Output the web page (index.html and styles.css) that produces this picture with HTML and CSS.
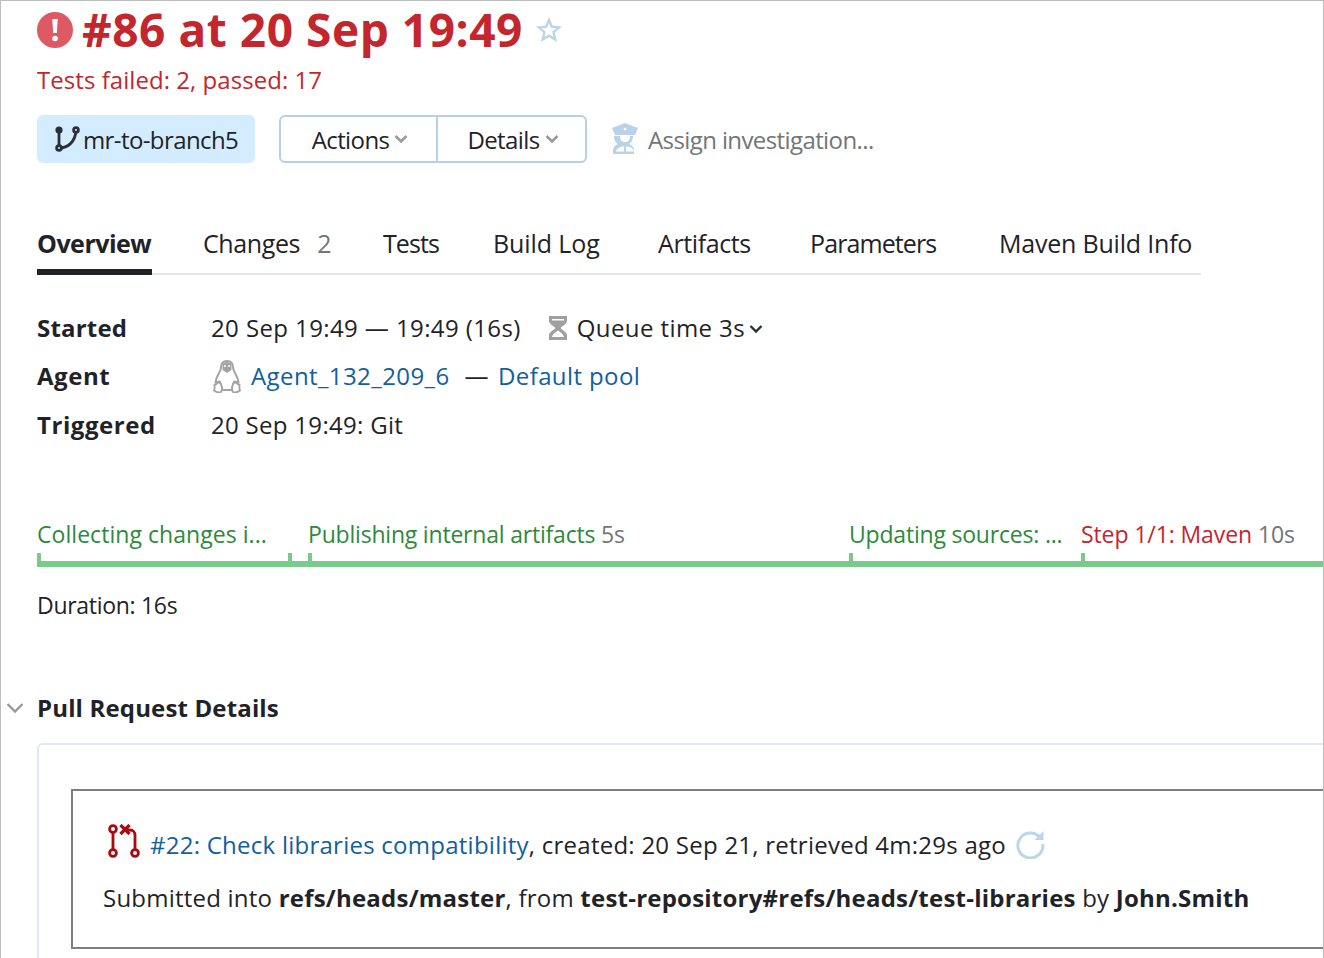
FILE: index.html
```html
<!DOCTYPE html>
<html lang="en">
<head>
  <meta charset="UTF-8">
  <title>#86 at 20 Sep 19:49</title>
  <link rel="stylesheet" href="styles.css">
</head>
<body>
  <div class="page">
    <div class="title-row">
      <svg class="icon-error" viewBox="0 0 36 36" width="36" height="36"><circle cx="18" cy="18" r="18" fill="#dd5a64"/><path d="M15.200 7h5.600l-1 14h-3.600z" fill="#fff"/><circle cx="18" cy="26.500" r="2.800" fill="#fff"/></svg>
      <h1>#86 at 20 Sep 19:49</h1>
      <svg class="icon-star" viewBox="0 0 26 26" width="26" height="26"><path d="M13 3l2.900 6.800 7.300.6-5.600 4.800 1.700 7.200-6.300-3.800-6.300 3.800 1.700-7.200-5.600-4.800 7.300-.6z" fill="none" stroke="#bcd5ea" stroke-width="2.400"/></svg>
    </div>
    <div class="status-text">Tests failed: 2, passed: 17</div>
    <div class="action-row">
      <div class="branch">
        <svg viewBox="0 0 26 28" width="26" height="28"><g fill="none" stroke="#2b3038" stroke-width="2.800"><path d="M5 5v18M5 23c9 0 16-6 17-17"/><circle cx="22" cy="5" r="2.400" fill="#d4ecff"/><circle cx="5" cy="23" r="2.400" fill="#d4ecff"/></g><circle cx="5" cy="5" r="3.600" fill="#2b3038"/></svg>
        <span>mr-to-branch5</span>
      </div>
      <div class="btn-group">
        <div class="btn btn-actions">Actions<svg class="caret" viewBox="0 0 14 10" width="14" height="10"><path d="M1.500 2l5.500 5.500L12.500 2" fill="none" stroke="#9a9a9a" stroke-width="2.600"/></svg></div>
        <div class="btn btn-details">Details<svg class="caret" viewBox="0 0 14 10" width="14" height="10"><path d="M1.500 2l5.500 5.500L12.500 2" fill="none" stroke="#9a9a9a" stroke-width="2.600"/></svg></div>
      </div>
      <div class="assign">
        <svg viewBox="0 0 28 32" width="28" height="32"><path d="M14 0l13 5-3 7H4L1 5z" fill="#b9d2e8"/><circle cx="14" cy="6" r="1.300" fill="#fff"/><path d="M6 13h3c0 4 2 6 5 6s5-2 5-6h3c0 4-1.500 6.500-4 8 3 1 4.500 3 5 6v4H2v-4c.5-3 2-5 5-6-2.500-1.500-4-4-4-8z" fill="#b9d2e8"/><path d="M5 28.500c1-3.500 4-5 8-5v5zM15 23.500c4 0 7 1.500 8 5h-8z" fill="#fff"/></svg>
        <span>Assign investigation...</span>
      </div>
    </div>

    <div class="tabs">
      <div class="tab tab-active">Overview</div>
      <div class="tab tab-changes">Changes <span class="count">2</span></div>
      <div class="tab tab-tests">Tests</div>
      <div class="tab tab-log">Build Log</div>
      <div class="tab tab-artifacts">Artifacts</div>
      <div class="tab tab-params">Parameters</div>
      <div class="tab tab-maven">Maven Build Info</div>
    </div>

    <div class="info">
      <div class="info-label">Started</div>
      <div class="info-value">
        <span>20 Sep 19:49 — 19:49 (16s)</span>
        <svg class="icon-glass" viewBox="0 0 20 26" width="20" height="26"><path d="M1 1h18v5c0 3-5 5-6.500 7 1.500 2 6.500 4 6.500 7v5H1v-5c0-3 5-5 6.500-7C6 11 1 9 1 6z" fill="#a0a0a0"/><path d="M4 4h12v1.600H4zM10 15.500c-2 1.500-5.500 3.500-6 6.500h12c-.5-3-4-5-6-6.500z" fill="#fff"/></svg>
        <span>Queue time 3s</span>
        <svg class="caret-dark" viewBox="0 0 14 10" width="14" height="10"><path d="M1.500 2l5.500 5.500L12.500 2" fill="none" stroke="#2b3038" stroke-width="2.400"/></svg>
      </div>
      <div class="info-label info-label-wide">Agent</div>
      <div class="info-value">
        <svg class="icon-linux" viewBox="0 0 28 33" width="28" height="33"><path d="M14 1c-4 0-6 2.500-6 6.500 0 4.500-5 8-5.500 15l4-1c1 .5 2 5 2.500 8.500h10c.5-3.500 1.500-8 2.500-8.500l4 1c-.5-7-5.500-10.500-5.500-15C20 3.500 18 1 14 1z" fill="#fff" stroke="#a3a3a3" stroke-width="2"/><path d="M9.500 5c0-2 2-3 4.500-3s4.500 1 4.500 3v5l-4.500 3-4.500-3z" fill="#a3a3a3"/><path d="M11 6h2M15 6h2" stroke="#fff" stroke-width="1.600"/><path d="M8 32c-2 1-5 0-7-1.500 1-2 .5-3.500.5-5.500 2 0 3-3 5-2.500 2 1.500 3.500 6.500 1.500 9.500zM20 32c2 1 5 0 7-1.500-1-2-.5-3.500-.5-5.500-2 0-3-3-5-2.500-2 1.500-3.500 6.500-1.500 9.500z" fill="#fff" stroke="#a3a3a3" stroke-width="1.800"/></svg>
        <a href="#">Agent_132_209_6</a>
        <span class="dash">—</span>
        <a href="#">Default pool</a>
      </div>
      <div class="info-label info-label-wide">Triggered</div>
      <div class="info-value"><span class="trigger">20 Sep 19:49: Git</span></div>
    </div>

    <div class="timeline">
      <div class="seg seg-collect"><span class="seg-label ok">Collecting changes i...</span><i></i></div>
      <div class="seg seg-small"><i></i></div>
      <div class="seg seg-publish"><span class="seg-label ok">Publishing internal artifacts <b>5s</b></span><i></i></div>
      <div class="seg seg-update"><span class="seg-label ok">Updating sources: ...</span><i></i></div>
      <div class="seg seg-step"><span class="seg-label bad">Step 1/1: Maven <b>10s</b></span><i></i></div>
    </div>
    <div class="duration">Duration: 16s</div>

    <div class="section-head">
      <svg viewBox="0 0 18 12" width="18" height="12"><path d="M1.500 2l7.500 7.500L16.500 2" fill="none" stroke="#9a9a9a" stroke-width="2.400"/></svg>
      <h2>Pull Request Details</h2>
    </div>
    <div class="pr-card">
      <div class="pr-box">
        <div class="pr-line">
          <svg class="icon-pr" viewBox="0 0 34 40" width="34" height="40"><g fill="none" stroke="#a80c12" stroke-width="2.800"><circle cx="6" cy="5" r="3.400"/><circle cx="6" cy="29" r="3.400"/><circle cx="28" cy="29" r="3.400"/><path d="M6 8.500v17M28 25.500V11c0-3-2-5-5-5h-3"/><path d="M13.500 1l9 9M22.500 1l-9 9" stroke-width="3.200"/></g></svg>
          <a href="#">#22: Check libraries compatibility</a><span>, created: 20 Sep 21, retrieved 4m:29s ago</span>
          <svg class="icon-refresh" viewBox="0 0 30 30" width="30" height="30"><path d="M25 8.500A12.500 12.500 0 1 0 27.800 15" fill="none" stroke="#bcd5ea" stroke-width="3"/><path d="M28.500 2V11H19.500z" fill="#bcd5ea"/></svg>
        </div>
        <div class="pr-submit">Submitted into <b>refs/heads/master</b>, from <b>test-repository#refs/heads/test-libraries</b> by <b>John.Smith</b></div>
      </div>
    </div>
  </div>
</body>
</html>
```

FILE: styles.css
```css
html, body { margin: 0; height: 100%; background: #fff; }
body { font-family: "Open Sans", "Noto Sans", sans-serif; color: #1f2328; overflow: hidden; }
a { color: #11609f; text-decoration: none; }

.page { height: 958px; box-sizing: border-box; border: solid #bdbdbd; border-width: 1px 1px 0 1px; padding-left: 36px; overflow: hidden; }

.title-row { display: flex; align-items: center; height: 58px; }
.title-row h1 { font-size: 46px; line-height: 50px; margin: 0 0 2px 9px; color: #c4262e; font-weight: 700; letter-spacing: 0.55px; white-space: nowrap; }
.icon-star { margin: 0 0 0 13px; }
.status-text { font-size: 24px; line-height: 32px; margin-top: 5px; color: #c4262e; letter-spacing: 0.05px; }

.action-row { display: flex; align-items: center; margin-top: 19px; height: 48px; font-size: 24px; letter-spacing: -0.6px; }
.branch { display: flex; align-items: center; height: 48px; width: 218px; box-sizing: border-box; padding-left: 17px; background: #d4ecff; border-radius: 6px; }
.branch span { margin-left: 3px; }
.btn-group { display: flex; margin-left: 24px; height: 48px; box-sizing: border-box; border: 2px solid #b6d0e6; border-radius: 6px; }
.btn { display: flex; align-items: center; justify-content: center; gap: 5px; box-sizing: border-box; padding-left: 3px; }
.btn-actions { width: 157px; border-right: 2px solid #b6d0e6; }
.btn-details { width: 147px; }
.assign { display: flex; align-items: center; margin-left: 24px; color: #737577; }
.assign span { margin-left: 9px; }

.tabs { display: flex; width: 1164px; margin-top: 50px; height: 62px; box-sizing: border-box; border-bottom: 2px solid #e4e6e8; font-size: 25px; letter-spacing: -0.4px; }
.tab { line-height: 60px; white-space: nowrap; }
.tab-active { width: 115px; height: 62px; box-sizing: border-box; margin-right: 51px; font-weight: 700; border-bottom: 6px solid #1f2328; letter-spacing: -0.5px; }
.tab-changes { width: 180px; }
.tab-tests { width: 110px; letter-spacing: -0.9px; }
.tab-log { width: 165px; letter-spacing: -0.1px; }
.tab-artifacts { width: 152px; letter-spacing: -0.4px; }
.tab-params { width: 189px; letter-spacing: -0.9px; }
.tab-maven { letter-spacing: -0.2px; }
.count { color: #737577; margin-left: 11px; }

.info { display: grid; grid-template-columns: 174px 1fr; grid-template-rows: 49px 48px 50px; margin-top: 28px; font-size: 24px; line-height: 34px; letter-spacing: 0.4px; }
.info-label { display: flex; align-items: center; font-weight: 700; letter-spacing: 0.2px; }
.info-label-wide { letter-spacing: 0.55px; }
.info-value { display: flex; align-items: center; white-space: nowrap; }
.icon-glass { margin-left: 27px; margin-right: 9px; }
.caret-dark { margin-left: 4px; margin-top: 3px; }
.icon-linux { margin-left: 2px; margin-right: 10px; }
.dash { margin: 0 9px 0 15px; }
.trigger { letter-spacing: 0.3px; }

.timeline { display: flex; margin-top: 67px; height: 50px; font-size: 23px; letter-spacing: -0.2px; }
.seg { position: relative; box-sizing: border-box; height: 50px; border-bottom: 6px solid #79cb8a; white-space: nowrap; }
.seg i { position: absolute; left: 0; bottom: 0; width: 4px; height: 8px; background: #79cb8a; }
.seg-collect { width: 251px; letter-spacing: 0.05px; }
.seg-small { width: 20px; }
.seg-publish { width: 541px; }
.seg-update { width: 232px; }
.seg-step { width: 242px; letter-spacing: -0.1px; }
.seg-label { display: block; line-height: 34px; }
.seg-label b { font-weight: 400; color: #737577; }
.ok { color: #2d8a3c; }
.bad { color: #c4262e; }
.duration { font-size: 23px; line-height: 32px; margin-top: 22px; letter-spacing: -0.3px; }

.section-head { display: flex; align-items: center; margin: 69px 0 0 -31px; height: 36px; }
.section-head h2 { font-size: 24px; margin: -2px 0 0 13px; font-weight: 700; letter-spacing: 0.15px; }
.pr-card { margin-top: 17px; height: 300px; box-sizing: border-box; border: solid #e3e8ef; border-width: 2px 0 0 2px; border-radius: 6px 0 0 0; padding: 44px 0 0 32px; }
.pr-box { height: 160px; box-sizing: border-box; border: solid #7f7f7f; border-width: 2px 0 2px 2px; padding-left: 31px; font-size: 24px; letter-spacing: 0.25px; white-space: nowrap; }
.pr-line { display: flex; align-items: center; height: 34px; margin-top: 36px; }
.icon-pr { margin-left: 3px; margin-right: 9px; }
.pr-line .icon-refresh { margin-left: 9px; }
.pr-submit { margin: 20px 0 0 -1px; line-height: 34px; letter-spacing: 0.22px; }
```
